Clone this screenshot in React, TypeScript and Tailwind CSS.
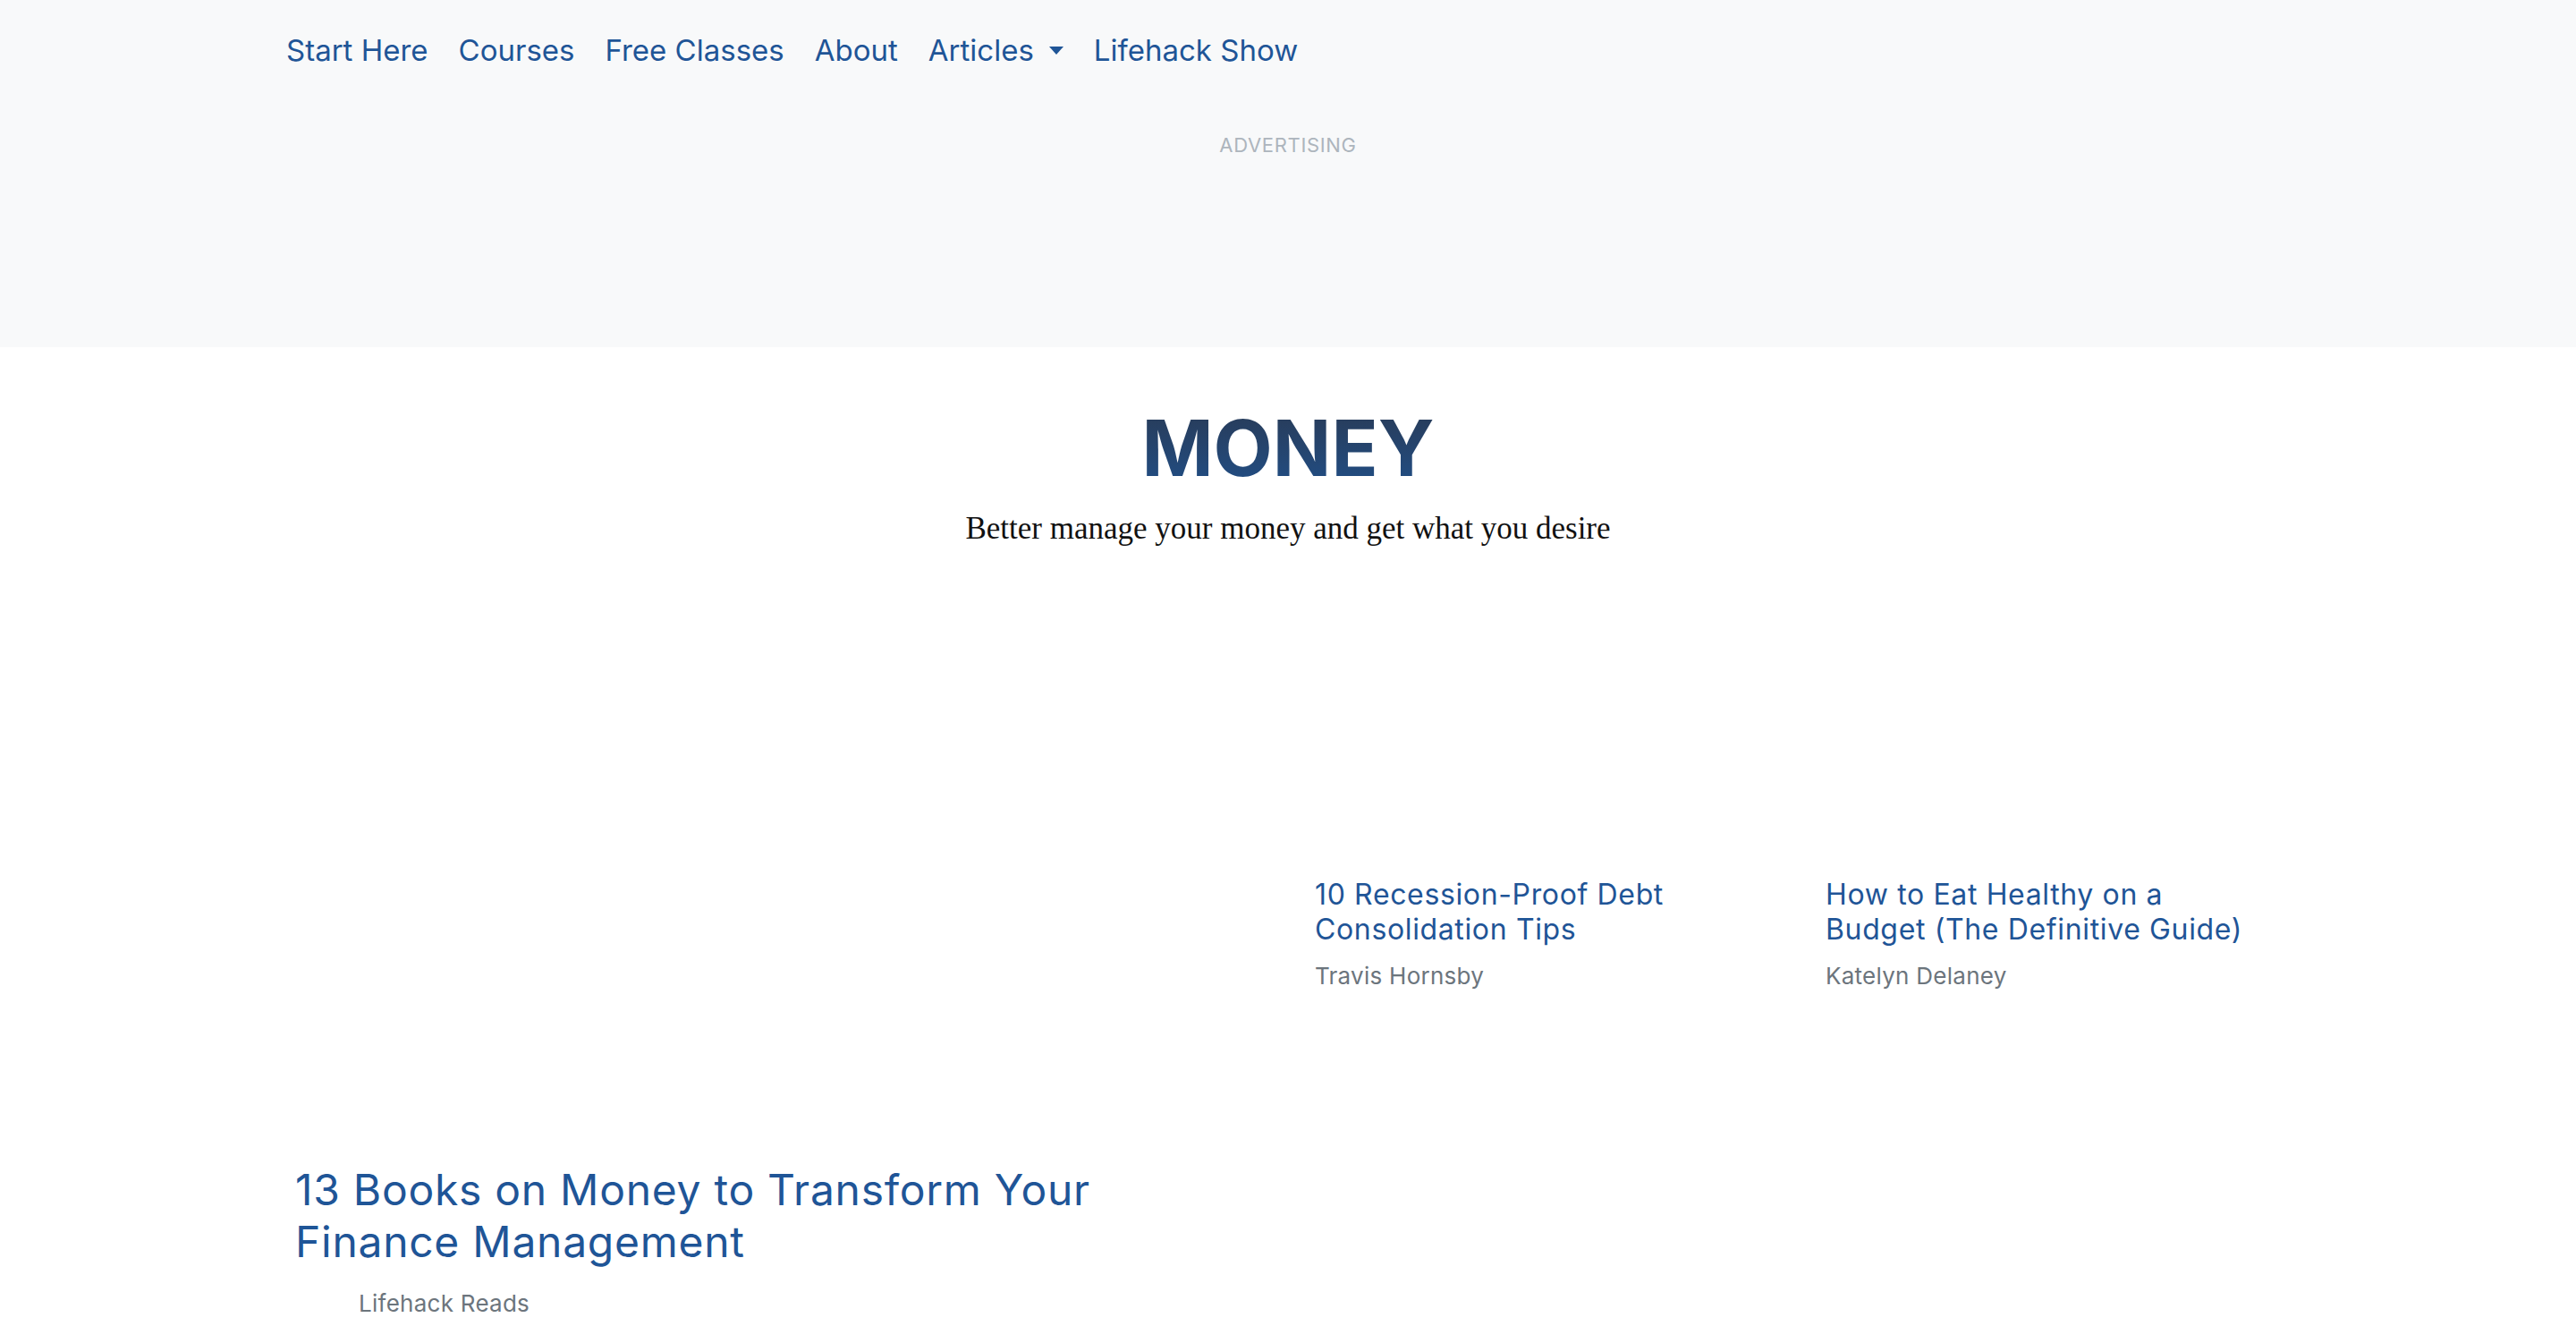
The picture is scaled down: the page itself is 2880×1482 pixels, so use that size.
const navItems = ['Start Here', 'Courses', 'Free Classes', 'About', 'Articles', 'Lifehack Show']

const sans = "font-['Inter','Liberation_Sans',sans-serif]"

interface CardProps {
  title: string
  author: string
}

const SmallCard = ({ title, author }: CardProps) => (
  <div className="flex flex-col">
    <div className="h-[357px]" />
    <a className={`${sans} text-[32px] leading-[39px] tracking-[0.02em] text-[#1f5597]`}>{title}</a>
    <div className={`${sans} mt-[15px] text-[26px] leading-[36px] tracking-[0.01em] text-[#6c757d]`}>{author}</div>
  </div>
)

export default function App() {
  return (
    <div className="min-h-screen bg-white">
      <header className="h-[388px] bg-[#f8f9fa]">
        <nav className={`${sans} ml-[320px] flex items-center gap-[34px] pt-[34px] text-[33px] leading-[44px] text-[#1f5597]`}>
          {navItems.map((item) => (
            <a key={item} className="flex items-center">
              {item}
              {item === 'Articles' && (
                <span className="ml-[17px] inline-block h-0 w-0 border-x-[8px] border-t-[9px] border-x-transparent border-t-[#1f5597]" />
              )}
            </a>
          ))}
        </nav>
        <div className={`${sans} mt-[68px] text-center text-[22px] tracking-[0.03em] text-[#adb5bd]`}>ADVERTISING</div>
      </header>

      <section className="flex flex-col items-center pt-[63px]">
        <h1 className={`${sans} bg-linear-to-b from-[#283a55] to-[#1f4f88] bg-clip-text text-[86px] font-bold leading-[100px] text-transparent`}>
          MONEY
        </h1>
        <p className="mt-[18px] font-['Georgia','Liberation_Serif',serif] text-[35px] leading-[44px] text-[#111]">
          Better manage your money and get what you desire
        </p>
      </section>

      <main className="ml-[330px] mt-[10px] grid w-[2260px] grid-cols-[1110px_1fr] gap-[30px]">
        <div className="flex flex-col pt-[678px]">
          <a className={`${sans} pr-[100px] text-[48px] leading-[58px] tracking-[0.015em] text-[#1f5597]`}>
            13 Books on Money to Transform Your Finance Management
          </a>
          <div className={`${sans} mt-[22px] pl-[71px] text-[26px] leading-[36px] tracking-[0.01em] text-[#6c757d]`}>Lifehack Reads</div>
        </div>
        <div className="grid grid-cols-[541px_490px] gap-[30px] self-start">
          <SmallCard title="10 Recession-Proof Debt Consolidation Tips" author="Travis Hornsby" />
          <SmallCard title="How to Eat Healthy on a Budget (The Definitive Guide)" author="Katelyn Delaney" />
        </div>
      </main>
    </div>
  )
}
